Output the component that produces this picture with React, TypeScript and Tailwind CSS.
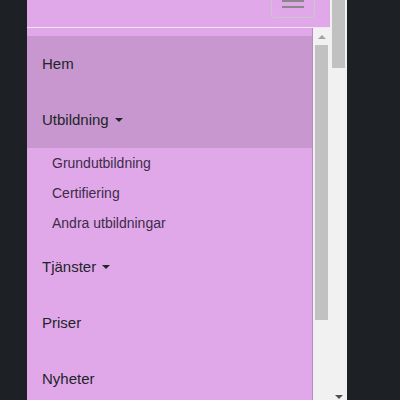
import React from 'react';

type NavItem = {
  label: string;
  dropdown?: boolean;
  active?: boolean;
  children?: string[];
};

const items: NavItem[] = [
  { label: 'Hem', active: true },
  {
    label: 'Utbildning',
    dropdown: true,
    active: true,
    children: ['Grundutbildning', 'Certifiering', 'Andra utbildningar'],
  },
  { label: 'Tjänster', dropdown: true },
  { label: 'Priser' },
  { label: 'Nyheter' },
];

const Caret = () => (
  <span className="ml-[6px] inline-block h-0 w-0 border-x-[4px] border-t-[4px] border-x-transparent border-t-[#212529] align-middle" />
);

const App: React.FC = () => {
  return (
    <div className="flex h-[400px] w-[400px] overflow-hidden bg-[#1d2025] pl-[27px] font-['Liberation_Sans',Arial,sans-serif]">
      <div className="flex h-full w-[320px]">
        {/* page */}
        <div className="flex w-[303px] flex-col">
          <header className="relative h-[28px] shrink-0 border-b border-[#f4e2f7] bg-[#e1a8e9]">
            <button className="absolute left-[244px] top-[-20px] flex h-[38px] w-[44px] flex-col items-center justify-end gap-[4px] rounded-[4px] border border-[#c9c9c9] pb-[9px]">
              <span className="block h-[2px] w-[22px] bg-[#888888]" />
              <span className="block h-[2px] w-[22px] bg-[#888888]" />
              <span className="block h-[2px] w-[22px] bg-[#888888]" />
            </button>
          </header>
          <div className="flex min-h-0 flex-1">
            <nav className="w-[286px] border-r border-[#b98ac1] bg-[#e1a8e9] pt-[8px]">
              <div className="bg-[#c897d0]">
                {items
                  .filter((item) => item.active)
                  .map((item) => (
                    <div key={item.label} className="flex h-[56px] items-center px-[15px] text-[15px] text-[#212529]">
                      {item.label}
                      {item.dropdown && <Caret />}
                    </div>
                  ))}
              </div>
              {items[1].children?.map((child) => (
                <div key={child} className="flex h-[30px] items-center px-[25px] text-[14px] text-[#3d2b4a]">
                  {child}
                </div>
              ))}
              <div className="h-[1px]" />
              {items
                .filter((item) => !item.active)
                .map((item) => (
                  <div key={item.label} className="flex h-[56px] items-center px-[15px] text-[15px] text-[#212529]">
                    {item.label}
                    {item.dropdown && <Caret />}
                  </div>
                ))}
            </nav>
            {/* inner scrollbar */}
            <div className="flex w-[17px] flex-col items-center bg-[#f1f1f1]">
              <span className="mt-[7px] block h-0 w-0 border-x-[4px] border-b-[4px] border-x-transparent border-b-[#a3a3a3]" />
              <div className="mt-[6px] h-[275px] w-[13px] bg-[#c1c1c1]" />
            </div>
          </div>
        </div>
        {/* outer scrollbar */}
        <div className="flex h-full w-[17px] flex-col items-center justify-between bg-[#f1f1f1]">
          <div className="h-[68px] w-[13px] bg-[#c1c1c1]" />
          <span className="mb-[1px] block h-0 w-0 border-x-[4px] border-t-[4px] border-x-transparent border-t-[#505050]" />
        </div>
      </div>
    </div>
  );
};

export default App;
